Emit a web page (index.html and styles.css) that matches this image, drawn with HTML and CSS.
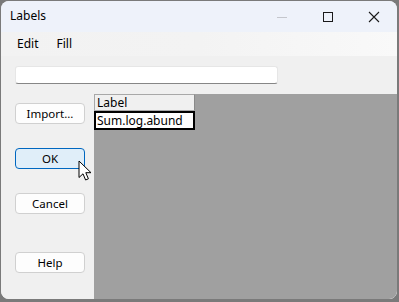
FILE: index.html
```html
<!DOCTYPE html>
<html>
<head>
<meta charset="utf-8">
<link rel="stylesheet" href="styles.css">
</head>
<body>
<div class="window">
  <div class="titlebar">
    <span class="title">Labels</span>
    <div class="controls">
      <span class="ctl min"><svg width="12" height="12" viewBox="0 0 12 12"><path d="M1 6.5h10" stroke="#c4c6cc" stroke-width="1"/></svg></span>
      <span class="ctl max"><svg width="12" height="12" viewBox="0 0 12 12"><rect x="1.5" y="1.5" width="9" height="9" fill="none" stroke="#1a1a1a" stroke-width="1"/></svg></span>
      <span class="ctl close"><svg width="12" height="12" viewBox="0 0 12 12"><path d="M1 1L11 11M11 1L1 11" stroke="#1a1a1a" stroke-width="1.1"/></svg></span>
    </div>
  </div>
  <div class="menubar">
    <span class="menu-item">Edit</span>
    <span class="menu-item">Fill</span>
  </div>
  <div class="content">
    <div class="input-row"><div class="textbox"></div></div>
    <div class="main">
      <div class="side">
        <button class="btn b-import">Import...</button>
        <button class="btn b-ok">OK</button>
        <button class="btn b-cancel">Cancel</button>
        <button class="btn b-help">Help</button>
      </div>
      <div class="grid-area">
        <div class="cell head">Label</div>
        <div class="cell data">Sum.log.abund</div>
      </div>
      <svg class="cursor" width="14" height="22" viewBox="0 0 14 22"><path d="M1 1V17.5L5 13.8L7.6 20L10.4 18.8L7.8 12.7H13Z" fill="#fff" stroke="#000" stroke-width="1" stroke-linejoin="round"/></svg>
    </div>
  </div>
</div>
</body>
</html>
```

FILE: styles.css
```css
html, body {
  margin: 0;
  padding: 0;
}
body {
  width: 399px;
  height: 302px;
  background: #7a7a7a;
  font-family: "Noto Sans", "Open Sans", sans-serif;
  font-size: 12px;
  color: #000;
  overflow: hidden;
}
.window {
  margin: 1px;
  width: 396px;
  height: 298px;
  border-radius: 8px;
  overflow: hidden;
  background: #f0f0f0;
  display: flex;
  flex-direction: column;
}
.titlebar {
  height: 31px;
  background: #eef2fa;
  display: flex;
  align-items: center;
  justify-content: space-between;
  flex: none;
}
.title {
  padding-left: 9px;
  font-size: 12px;
  line-height: 16px;
  margin-top: -1px;
}
.controls {
  display: flex;
  height: 100%;
}
.ctl {
  width: 46px;
  display: flex;
  align-items: center;
  justify-content: center;
}
.ctl svg { display: block; }
.menubar {
  height: 24px;
  background: linear-gradient(to right, #f2f2f2 0%, #f3f3f3 50%, #f9f9f9 100%);
  display: flex;
  align-items: center;
  flex: none;
}
.menu-item {
  padding: 0 0 0 16px;
  margin-right: 4px;
  line-height: 16px;
}
.menu-item + .menu-item { padding-left: 14px; }
.content {
  flex: 1;
  display: flex;
  flex-direction: column;
  background: #f0f0f0;
}
.input-row {
  padding: 10px 0 0 14px;
  height: 28px;
  box-sizing: border-box;
  flex: none;
}
.textbox {
  width: 263px;
  height: 18px;
  box-sizing: border-box;
  background: #fff;
  border: 1px solid #e6e6e6;
  border-bottom: 1px solid #868686;
  border-radius: 3px;
}
.main {
  flex: 1;
  display: flex;
  padding-top: 10px;
  position: relative;
}
.side {
  width: 93px;
  flex: none;
  display: flex;
  flex-direction: column;
  align-items: flex-start;
  padding: 9px 0 0 14px;
  box-sizing: border-box;
}
.btn {
  width: 70px;
  height: 21px;
  box-sizing: border-box;
  background: #fdfdfd;
  border: 1px solid #d0d0d0;
  border-radius: 4px;
  font-family: "Noto Sans", "Open Sans", sans-serif;
  font-size: 11.5px;
  line-height: 17px;
  padding: 0;
  color: #000;
}
.b-ok {
  margin-top: 24px;
  background: #e0eef9;
  border-color: #0067c0;
}
.b-cancel { margin-top: 24px; }
.b-help { margin-top: 38px; }
.grid-area {
  flex: 1;
  background: #a0a0a0;
}
.cell {
  width: 101px;
  box-sizing: border-box;
  padding-left: 2px;
  font-size: 12px;
}
.head {
  height: 17px;
  line-height: 15px;
  background: #f0f0f0;
  border: 1px solid #a8a8a8;
  border-right-color: #8a8a8a;
}
.data {
  height: 19px;
  line-height: 15px;
  background: #fff;
  border: 2px solid #000;
  padding-left: 1px;
}
.cursor {
  position: absolute;
  left: 77px;
  top: 76px;
}
```
